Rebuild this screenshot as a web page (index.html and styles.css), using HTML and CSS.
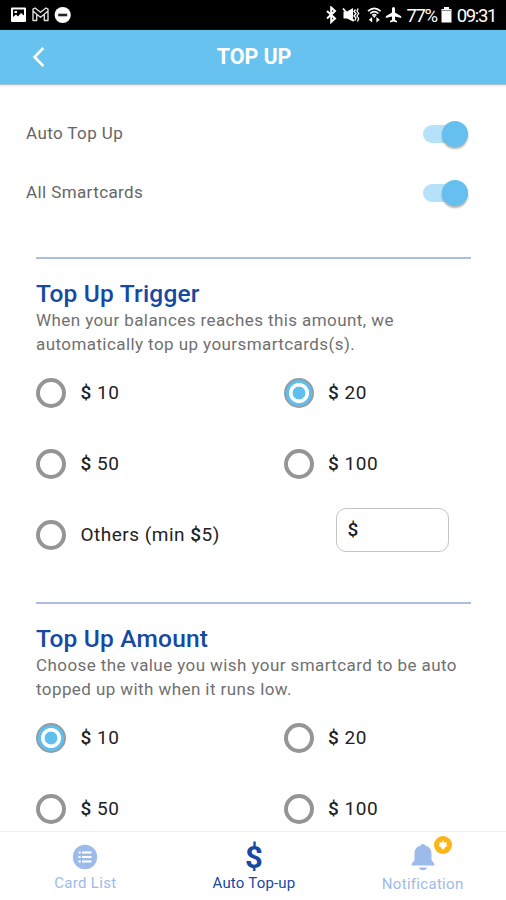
FILE: index.html
```html
<!DOCTYPE html>
<html lang="en">
<head>
<meta charset="utf-8">
<meta name="viewport" content="width=device-width, initial-scale=1">
<title>Top Up</title>
<link rel="stylesheet" href="styles.css">
</head>
<body>
<div class="screen">
  <div class="status">
    <svg class="status-left" width="62" height="18" viewBox="0 0 62 18">
      <path fill="#fff" fill-rule="evenodd" d="M1 2.5Q1 1.5 2 1.5H15Q16 1.5 16 2.5V15Q16 16 15 16H2Q1 16 1 15ZM3 3.5V11L6 8.5L8 10.5L11 7L14 9.5V3.5ZM4.5 5H7V7H4.5Z"/>
      <path fill="none" stroke="#ddd" stroke-width="1.4" stroke-linejoin="round" d="M23 3.2L25 2L30.5 6.3L36 2L38 3.2V14.5H34.3V8.2L30.5 11.2L26.7 8.2V14.5H23ZM26.7 8.2L23 5M34.3 8.2L38 5"/>
      <circle cx="52.7" cy="9" r="8.1" fill="#fff"/>
      <path stroke="#222" stroke-width="2.6" d="M48.2 9H57.2"/>
    </svg>
    <div class="status-right">
      <svg width="78" height="18" viewBox="0 0 78 18">
        <path fill="none" stroke="#fff" stroke-width="2" d="M2 5L10 12.5L6.2 16V1.5L10 5L2 12.5"/>
        <path fill="#fff" d="M18.5 5.5H22L28 2V15.5L22 12.5H18.5Z"/>
        <path stroke="#fff" stroke-width="1.8" d="M18 2.5L29 15"/>
        <path fill="none" stroke="#fff" stroke-width="1.3" d="M30.5 3.5L29 5.5L31 7.5L29 10L31 12L30 14.5M33.2 2.5L32 5L33.7 7.5L32 10L33.7 12.5L32.5 15.5"/>
        <path fill="none" stroke="#fff" stroke-width="1.6" d="M43 5.2Q49.3-.5 55.6 5.2M45.2 7.5Q49.3 3.8 53.4 7.5M47.2 9.5Q49.3 7.8 51.4 9.5"/>
        <path fill="#fff" d="M49.3 12L47.5 9.7H51.1ZM47.2 11V16.5L43.8 13.8ZM51.4 11V16.5L54.8 13.8Z"/>
        <path fill="#fff" d="M68.5 1C69.6 1 70 2 70 3V6.5L76.2 10.2V12L70 10.4V13.7L72 15V16.5L68.5 15.6L65 16.5V15L67 13.7V10.4L60.8 12V10.2L67 6.5V3C67 2 67.4 1 68.5 1Z"/>
      </svg>
      <span class="status-text percent">77%</span>
      <svg class="battery" width="11" height="16" viewBox="0 0 11 16"><path fill="#fff" d="M3 0H8V2H10.5V15.5H.5V2H3Z"/><path stroke="#888" d="M.5 3.5H10.5"/></svg>
      <span class="status-text">09:31</span>
    </div>
  </div>
  <header class="header">
    <svg class="back" width="14" height="22" viewBox="0 0 14 22"><path d="M11.3 2L2.5 11L11.3 20"/></svg>
    <h1>TOP UP</h1>
  </header>
  <main class="content">
    <div class="toggle-row"><span>Auto Top Up</span><span class="switch"></span></div>
    <div class="toggle-row"><span>All Smartcards</span><span class="switch"></span></div>
    <section class="section first">
      <h2>Top Up Trigger</h2>
      <p>When your balances reaches this amount, we<br>automatically top up yoursmartcards(s).</p>
      <div class="options">
        <div class="option"><span class="radio"></span><span><b>$</b> 10</span></div>
        <div class="option"><span class="radio on"></span><span><b>$</b> 20</span></div>
        <div class="option"><span class="radio"></span><span><b>$</b> 50</span></div>
        <div class="option"><span class="radio"></span><span><b>$</b> 100</span></div>
        <div class="option"><span class="radio"></span><span>Others (min <b>$</b>5)</span></div>
        <div class="field"><b>$</b></div>
      </div>
    </section>
    <section class="section second">
      <h2>Top Up Amount</h2>
      <p>Choose the value you wish your smartcard to be auto<br>topped up with when it runs low.</p>
      <div class="options">
        <div class="option"><span class="radio on"></span><span><b>$</b> 10</span></div>
        <div class="option"><span class="radio"></span><span><b>$</b> 20</span></div>
        <div class="option"><span class="radio"></span><span><b>$</b> 50</span></div>
        <div class="option"><span class="radio"></span><span><b>$</b> 100</span></div>
      </div>
    </section>
  </main>
  <nav class="nav">
    <div class="tab">
      <svg width="26" height="26" viewBox="0 0 26 26"><circle cx="13" cy="13" r="12.2" fill="#9dbbea"/><path stroke="#fff" stroke-width="2" d="M6.5 8.5H8.7M10 8.5H19.5M6.5 13H8.7M10 13H19.5M6.5 17.5H8.7M10 17.5H19.5"/></svg>
      <span>Card List</span>
    </div>
    <div class="tab active">
      <span class="dollar">$</span>
      <span>Auto Top-up</span>
    </div>
    <div class="tab notification">
      <svg width="26" height="28" viewBox="0 0 26 28"><path fill="#9dbbea" d="M13 0C14.3 0 15 .8 15.2 1.6C19.4 2.5 21.5 6 21.5 10V16L24.3 19.8V21.5H1.7V19.8L4.5 16V10C4.5 6 6.6 2.5 10.8 1.6C11 .8 11.7 0 13 0ZM9 23.5H17C16.5 27 9.5 27 9 23.5Z"/></svg>
      <span>Notification</span>
      <svg class="badge" width="18" height="18" viewBox="0 0 18 18"><circle cx="9" cy="9" r="9" fill="#fcb514"/><path fill="#fff" d="M9 4L10.2 6.8L12.8 6L12.2 8.2L13.5 9.5L11 11.5L9 14L7 11.5L4.5 9.5L5.8 8.2L5.2 6L7.8 6.8Z"/></svg>
    </div>
  </nav>
</div>
</body>
</html>
```

FILE: styles.css
```css
* { box-sizing: border-box; }
body { margin: 0; background: #fff; font-family: Roboto, "Liberation Sans", sans-serif; }
.screen { height: 900px; display: flex; flex-direction: column; overflow: hidden; }
.status { flex: none; height: 30px; background: #000; color: #fff; display: flex; justify-content: space-between; align-items: center; padding: 0 10px; }
.status svg { display: block; }
.status-right { display: flex; align-items: center; }
.status-text { font-size: 18.5px; line-height: 20px; letter-spacing: -1.35px; padding-top: 2px; }
.percent { margin-left: 3px; }
.battery { margin: 0 5px 0 4px; }
.header { flex: none; height: 55px; background: #67c2ef; border-bottom: 1px solid #a9bfcb; box-shadow: 0 1px 2px #e8dfe2; display: grid; grid-template-columns: 60px 1fr 58px; align-items: center; color: #fff; }
.back { margin-left: 32px; fill: none; stroke: #fff; stroke-width: 2.6; }
.header h1 { margin: 0; font-size: 21.5px; line-height: 24px; font-weight: 700; text-align: center; letter-spacing: -.1px; }
.content { flex: 1; min-height: 0; overflow: hidden; padding-top: 19px; }
.toggle-row { height: 59px; padding: 0 38px 1px 26px; display: flex; align-items: center; justify-content: space-between; color: #666; font-size: 17px; letter-spacing: .4px; }
.switch { width: 45px; height: 18px; border-radius: 9px; background: #b5e2f9; display: flex; align-items: center; justify-content: flex-end; margin-top: 1px; }
.switch::after { content: ""; width: 26px; height: 26px; border-radius: 50%; background: #65bfef; box-shadow: 0 2px 2px rgba(0,0,0,.3); }
.section { margin: 0 35px 0 36px; border-top: 2px solid #adbde0; }
.section.first { margin-top: 35px; height: 345px; }
.section h2 { margin: 0; padding-top: 19.5px; font-size: 24.5px; line-height: 29.5px; font-weight: 500; color: #1649a3; letter-spacing: .2px; }
.section p { margin: 0 0 1px; font-size: 17px; line-height: 24px; color: #707070; letter-spacing: .42px; white-space: nowrap; }
.options { display: grid; grid-template-columns: 247.5px 1fr; grid-auto-rows: 71px; }
.option { display: flex; align-items: center; gap: 14.5px; font-size: 19px; color: #222; letter-spacing: .5px; white-space: nowrap; }
.option b, .field b { font-weight: 500; }
.radio { flex: none; width: 30px; height: 30px; border-radius: 50%; border: 4px solid #959595; }
.radio.on { border: 2px solid #929da5; background: radial-gradient(circle, #5fbfef 0 6px, #fff 6.8px 9.6px, #5fbfef 10.4px); }
.field { width: 113px; height: 44px; margin: 9px 0 0 52px; border: 1.5px solid #c4c4c4; border-radius: 10px; padding: 0 11px; font-size: 19px; line-height: 41px; color: #222; }
.nav { flex: none; height: 69px; border-top: 1px solid #eee; background: #fff; display: grid; grid-template-columns: repeat(3, 1fr); }
.tab { position: relative; display: flex; flex-direction: column; align-items: center; padding: 12px 0 0 2px; color: #9dbbea; font-size: 15px; line-height: 18px; letter-spacing: .3px; }
.tab > span { margin-top: 4px; }
.tab.active { color: #1649a3; letter-spacing: .2px; }
.tab .dollar { font-size: 31px; line-height: 27px; height: 26px; font-weight: 700; margin-top: 0; }
.tab.notification > span { margin-top: 3px; }
.badge { position: absolute; top: 4px; left: 97px; }
```
